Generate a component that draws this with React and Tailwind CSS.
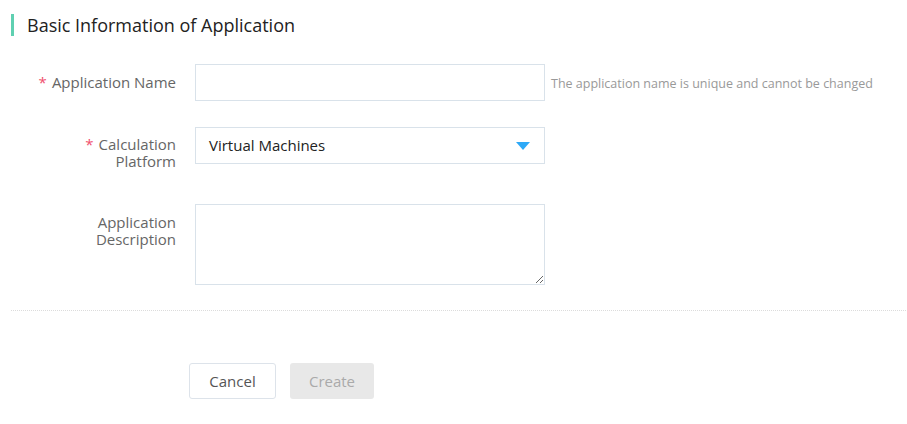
export default function App() {
  return (
    <div className="min-h-[424px] w-[907px] bg-white font-['Open_Sans',sans-serif]">
      <div className="flex items-center pl-[11px] pt-[14px]">
        <div className="h-[22px] w-[3px] bg-[#5fd0b1]" />
        <h1 className="ml-[13px] text-[18px] leading-[22px] text-[#222]">Basic Information of Application</h1>
      </div>

      <div className="mt-[28px] flex flex-col">
        <div className="flex items-start">
          <label className="w-[176px] pt-[10px] text-right text-[15px] leading-4 text-[#666]">
            <span className="mr-[5px] text-[#f0506e]">*</span>Application Name
          </label>
          <input className="ml-[19px] h-[37px] w-[350px] border border-[#d9e2ea] px-3 text-[15px] outline-none" />
          <span className="ml-[6px] mt-[3px] self-center text-[12.5px] text-[#999]">
            The application name is unique and cannot be changed
          </span>
        </div>

        <div className="mt-[26px] flex h-[37px] items-start">
          <label className="w-[176px] pt-[9px] text-right text-[15px] leading-[17px] text-[#666]">
            <span className="mr-[5px] text-[#f0506e]">*</span>Calculation
            <br />
            Platform
          </label>
          <div className="ml-[19px] flex h-[37px] w-[350px] items-center justify-between border border-[#d9e2ea] pl-[13px] pr-[14px]">
            <span className="text-[15px] text-[#222]">Virtual Machines</span>
            <svg width="14" height="8" viewBox="0 0 14 8">
              <path d="M0 0 H14 L7 8 Z" fill="#2ea9f7" />
            </svg>
          </div>
        </div>

        <div className="mt-[40px] flex items-start">
          <label className="w-[176px] pt-[10px] text-right text-[15px] leading-[17px] text-[#666]">
            Application
            <br />
            Description
          </label>
          <textarea className="ml-[19px] h-[81px] w-[350px] resize border border-[#d9e2ea] px-3 py-2 text-[15px] outline-none" />
        </div>
      </div>

      <div className="ml-[11px] mr-px mt-[25px] border-t border-dotted border-[#dcdcdc]" />

      <div className="ml-[189px] mt-[52px] flex gap-[14px]">
        <button className="h-[36px] w-[87px] rounded-[3px] border border-[#dde3ea] bg-white text-[15px] text-[#555]">
          Cancel
        </button>
        <button className="h-[36px] w-[84px] rounded-[3px] bg-[#e8e8e8] text-[15px] text-[#aaa]">Create</button>
      </div>
    </div>
  );
}
